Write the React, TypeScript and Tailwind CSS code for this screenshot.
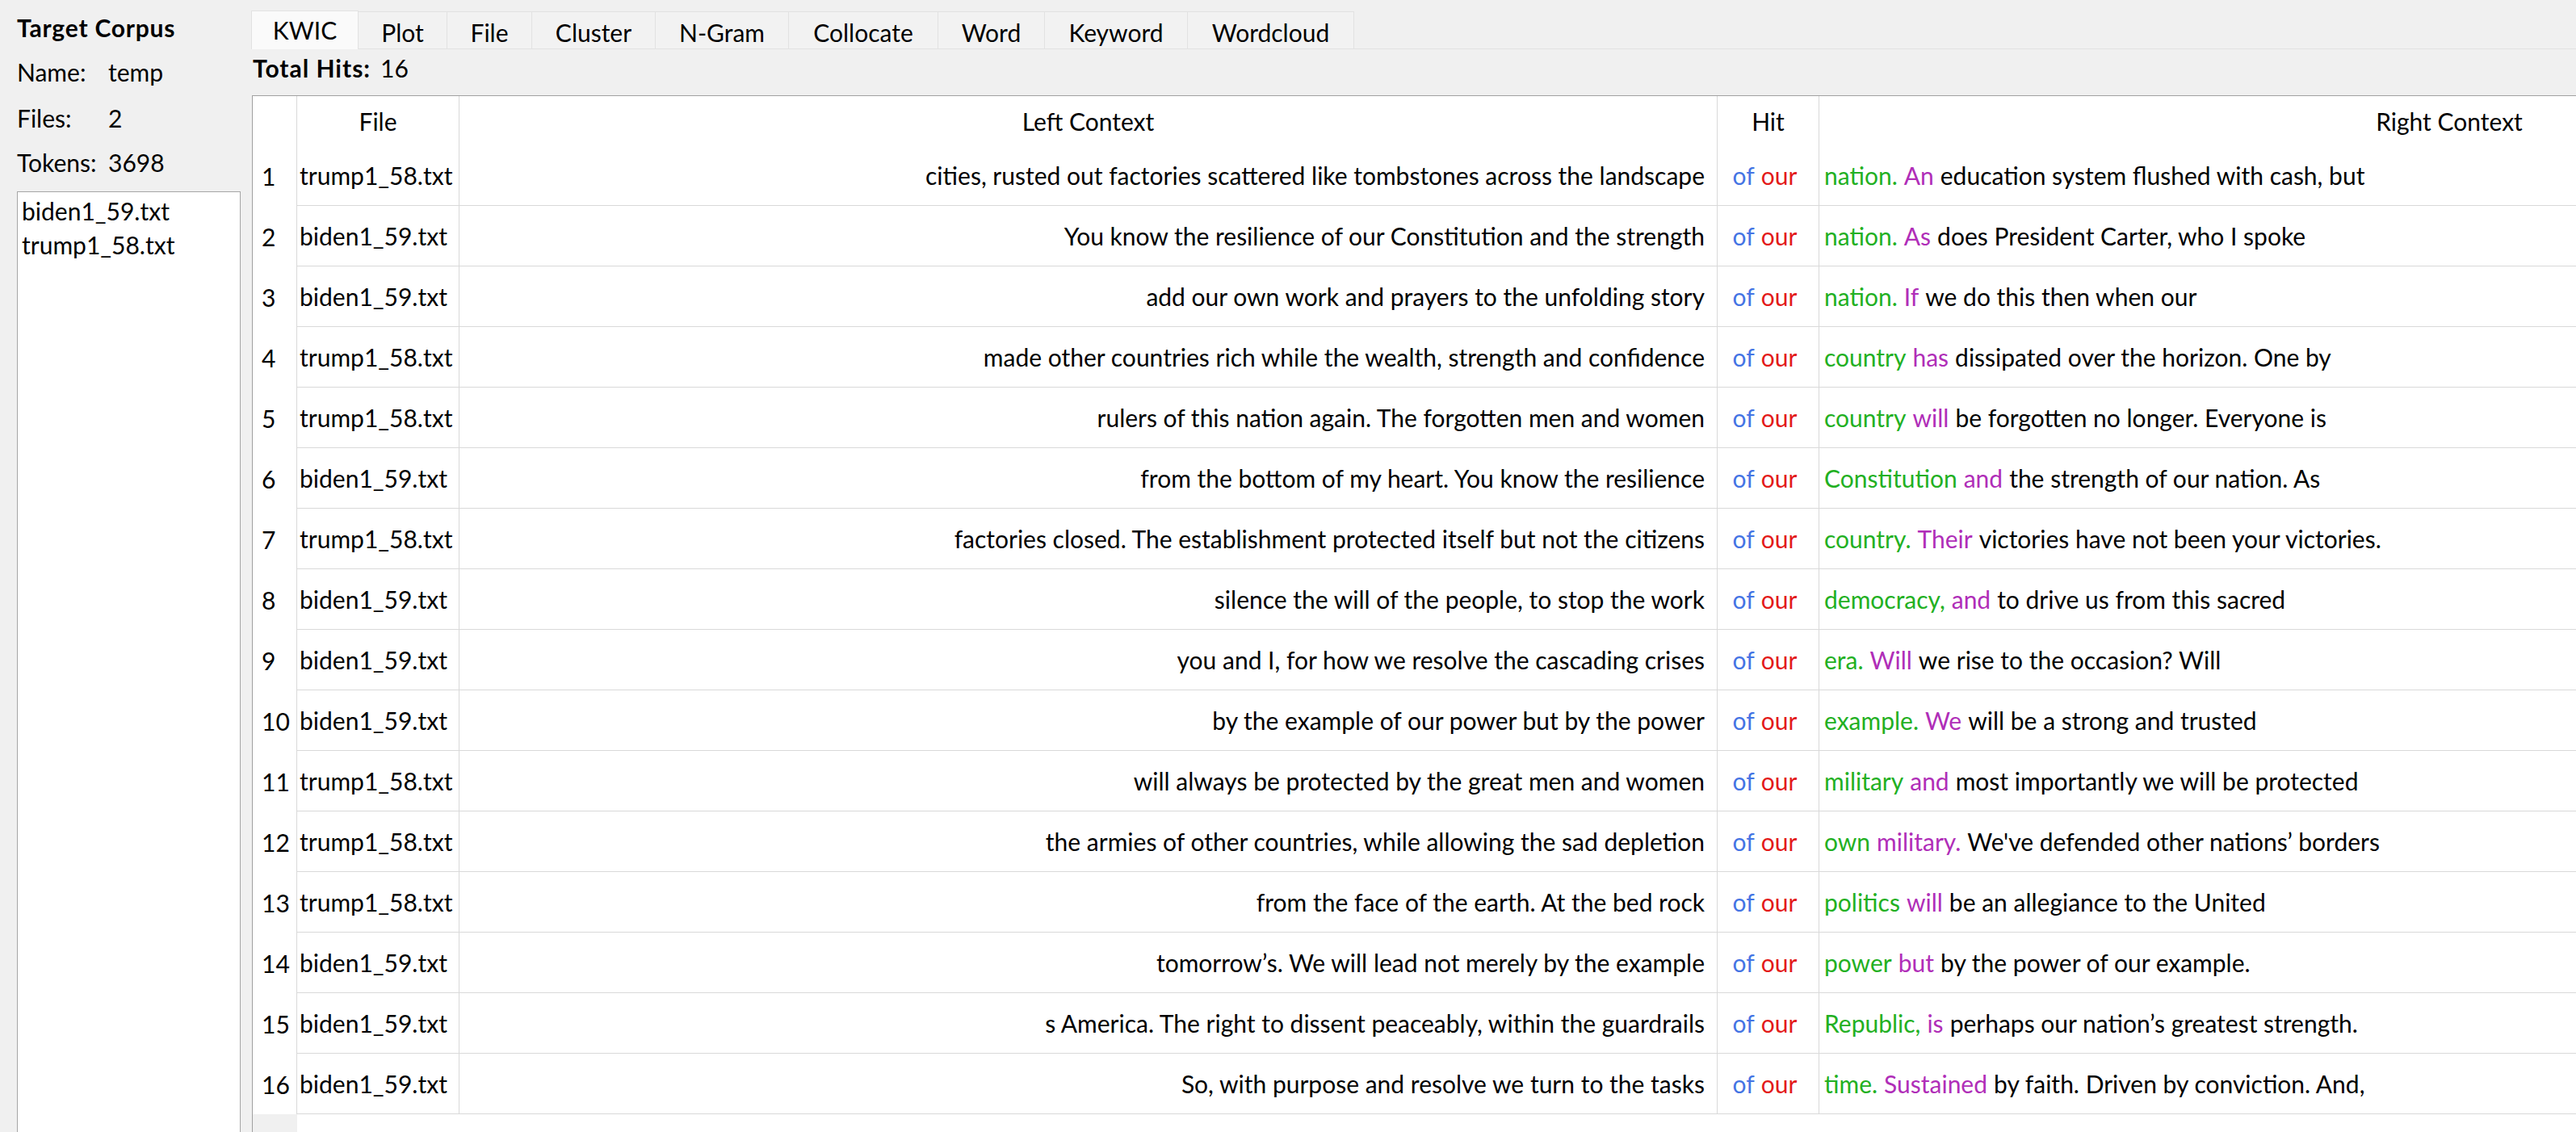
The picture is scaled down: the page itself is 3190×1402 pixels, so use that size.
import React from "react";

type Row = { file: string; left: string; g: string; p: string; rest: string };

const rows: Row[] = [
  { file: "trump1_58.txt", left: "cities, rusted out factories scattered like tombstones across the landscape", g: "nation.", p: "An", rest: "education system flushed with cash, but" },
  { file: "biden1_59.txt", left: "You know the resilience of our Constitution and the strength", g: "nation.", p: "As", rest: "does President Carter, who I spoke" },
  { file: "biden1_59.txt", left: "add our own work and prayers to the unfolding story", g: "nation.", p: "If", rest: "we do this then when our" },
  { file: "trump1_58.txt", left: "made other countries rich while the wealth, strength and confidence", g: "country", p: "has", rest: "dissipated over the horizon. One by" },
  { file: "trump1_58.txt", left: "rulers of this nation again. The forgotten men and women", g: "country", p: "will", rest: "be forgotten no longer. Everyone is" },
  { file: "biden1_59.txt", left: "from the bottom of my heart. You know the resilience", g: "Constitution", p: "and", rest: "the strength of our nation. As" },
  { file: "trump1_58.txt", left: "factories closed. The establishment protected itself but not the citizens", g: "country.", p: "Their", rest: "victories have not been your victories." },
  { file: "biden1_59.txt", left: "silence the will of the people, to stop the work", g: "democracy,", p: "and", rest: "to drive us from this sacred" },
  { file: "biden1_59.txt", left: "you and I, for how we resolve the cascading crises", g: "era.", p: "Will", rest: "we rise to the occasion? Will" },
  { file: "biden1_59.txt", left: "by the example of our power but by the power", g: "example.", p: "We", rest: "will be a strong and trusted" },
  { file: "trump1_58.txt", left: "will always be protected by the great men and women", g: "military", p: "and", rest: "most importantly we will be protected" },
  { file: "trump1_58.txt", left: "the armies of other countries, while allowing the sad depletion", g: "own", p: "military.", rest: "We've defended other nations\u2019 borders" },
  { file: "trump1_58.txt", left: "from the face of the earth. At the bed rock", g: "politics", p: "will", rest: "be an allegiance to the United" },
  { file: "biden1_59.txt", left: "tomorrow\u2019s. We will lead not merely by the example", g: "power", p: "but", rest: "by the power of our example." },
  { file: "biden1_59.txt", left: "s America. The right to dissent peaceably, within the guardrails", g: "Republic,", p: "is", rest: "perhaps our nation\u2019s greatest strength." },
  { file: "biden1_59.txt", left: "So, with purpose and resolve we turn to the tasks", g: "time.", p: "Sustained", rest: "by faith. Driven by conviction. And," },
];

const tabs: { label: string; w: string }[] = [
  { label: "Plot", w: "w-[110px]" },
  { label: "File", w: "w-[105px]" },
  { label: "Cluster", w: "w-[153px]" },
  { label: "N-Gram", w: "w-[165px]" },
  { label: "Collocate", w: "w-[185px]" },
  { label: "Word", w: "w-[132px]" },
  { label: "Keyword", w: "w-[177px]" },
  { label: "Wordcloud", w: "w-[206px]" },
];

export default function App() {
  return (
    <div className="w-[3190px] h-[1402px] bg-[#f0f0f0] flex overflow-hidden text-black text-[30px] leading-[36px] font-[family-name:Lato,sans-serif]">
      {/* Left panel */}
      <div className="w-[311px] shrink-0 flex flex-col pl-[21px] pt-[16px]">
        <div className="font-bold tracking-[0.8px]">Target Corpus</div>
        <div className="mt-[19px] flex">
          <span className="w-[113px]">Name:</span>
          <span>temp</span>
        </div>
        <div className="mt-[21px] flex">
          <span className="w-[113px]">Files:</span>
          <span>2</span>
        </div>
        <div className="mt-[19px] flex">
          <span className="w-[113px]">Tokens:</span>
          <span>3698</span>
        </div>
        <div className="mt-[18px] w-[277px] h-[1300px] shrink-0 bg-white border border-[#a6a6a6] pl-[5px] pt-[2px] leading-[42px]">
          <div>biden1_59.txt</div>
          <div>trump1_58.txt</div>
        </div>
      </div>

      {/* Main area */}
      <div className="flex-1 min-w-0 flex flex-col pt-[13px]">
        <div className="flex items-end h-[48px] border-b border-[#e2e2e2]">
          <div className="w-[133px] h-[48px] bg-[#fafafa] border-t border-l border-r border-[#e2e2e2] flex items-center justify-center -mb-px pb-[1px]">
            KWIC
          </div>
          {tabs.map((t) => (
            <div
              key={t.label}
              className={`${t.w} h-[46px] bg-[#f2f2f2] border-t border-r border-[#e2e2e2] flex items-center justify-center pt-[4px]`}
            >
              {t.label}
            </div>
          ))}
        </div>

        <div className="mt-[5px] flex pl-[2px]">
          <span className="font-bold tracking-[1px]">Total Hits:</span>
          <span className="ml-[12px]">16</span>
        </div>

        <div className="mt-[16px] ml-[1px] flex-1 flex flex-col w-[3500px] bg-white border-t border-l border-[#a0a0a0]">
          {/* Header */}
          <div className="flex h-[61px] shrink-0">
            <div className="w-[55px] shrink-0 border-r border-[#d9d9d9]" />
            <div className="w-[201px] shrink-0 border-r border-[#d9d9d9] flex items-center justify-center">File</div>
            <div className="w-[1558px] shrink-0 border-r border-[#d9d9d9] flex items-center justify-center">Left Context</div>
            <div className="w-[126px] shrink-0 border-r border-[#d9d9d9] flex items-center justify-center">Hit</div>
            <div className="w-[1560px] shrink-0 flex items-center justify-center">Right Context</div>
          </div>
          {/* Rows */}
          {rows.map((r, i) => (
            <div key={i} className="flex h-[75px] shrink-0">
              <div className="w-[55px] shrink-0 border-r border-[#d9d9d9] flex items-center pl-[11px]">{i + 1}</div>
              <div className="flex border-b border-[#d9d9d9]">
                <div className="w-[201px] shrink-0 border-r border-[#d9d9d9] flex items-center pl-[3px] whitespace-nowrap">{r.file}</div>
                <div className="w-[1558px] shrink-0 border-r border-[#d9d9d9] flex items-center justify-end pr-[15px] whitespace-nowrap overflow-hidden">
                  {r.left}
                </div>
                <div className="w-[126px] shrink-0 border-r border-[#d9d9d9] flex items-center justify-center pr-[8px] whitespace-nowrap">
                  <span className="text-[#4474e4]">of</span>
                  <span className="ml-[8px] text-[#e31a1a]">our</span>
                </div>
                <div className="w-[1560px] shrink-0 flex items-center pl-[6px] whitespace-nowrap">
                  <span className="text-[#22b022]">{r.g}</span>
                  <span className="ml-[8px] text-[#b02eb8]">{r.p}</span>
                  <span className="ml-[8px]">{r.rest}</span>
                </div>
              </div>
            </div>
          ))}
          {/* Filler */}
          <div className="flex flex-1">
            <div className="w-[55px] shrink-0 bg-[#f0f0f0]" />
            <div className="flex-1 bg-white" />
          </div>
        </div>
      </div>
    </div>
  );
}
